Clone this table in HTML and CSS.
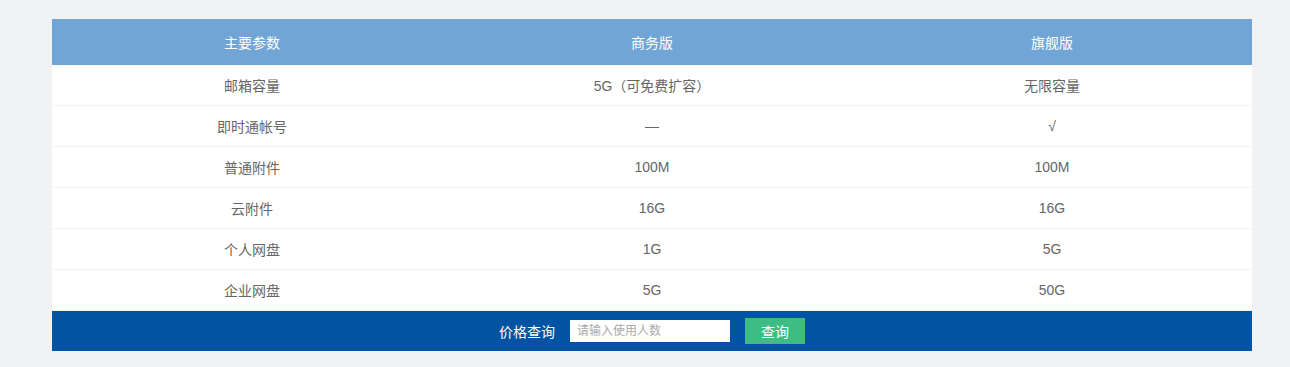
FILE: index.html
```html
<!DOCTYPE html>
<html lang="zh">
<head>
<meta charset="utf-8">
<link rel="stylesheet" href="styles.css">
</head>
<body>
<div class="page">
  <div class="price-table">
    <div class="row head">
      <div class="cell">主要参数</div>
      <div class="cell">商务版</div>
      <div class="cell">旗舰版</div>
    </div>
    <div class="row">
      <div class="cell">邮箱容量</div>
      <div class="cell">5G（可免费扩容）</div>
      <div class="cell">无限容量</div>
    </div>
    <div class="row">
      <div class="cell">即时通帐号</div>
      <div class="cell">—</div>
      <div class="cell">√</div>
    </div>
    <div class="row">
      <div class="cell">普通附件</div>
      <div class="cell">100M</div>
      <div class="cell">100M</div>
    </div>
    <div class="row">
      <div class="cell">云附件</div>
      <div class="cell">16G</div>
      <div class="cell">16G</div>
    </div>
    <div class="row">
      <div class="cell">个人网盘</div>
      <div class="cell">1G</div>
      <div class="cell">5G</div>
    </div>
    <div class="row">
      <div class="cell">企业网盘</div>
      <div class="cell">5G</div>
      <div class="cell">50G</div>
    </div>
    <div class="query">
      <span class="query-label">价格查询</span>
      <input class="query-input" type="text" placeholder="请输入使用人数">
      <button class="query-btn" type="button">查询</button>
    </div>
  </div>
</div>
</body>
</html>
```
FILE: styles.css
```css
html, body {
  margin: 0;
  padding: 0;
  background: #f1f2f4;
}
body {
  font-family: "Liberation Sans", Arial, "Noto Sans CJK SC", sans-serif;
  font-size: 14px;
  color: #666;
}
.page {
  padding: 19px 0 0 52px;
}
.price-table {
  width: 1200px;
  background: #fff;
}
.row {
  display: grid;
  grid-template-columns: repeat(3, 1fr);
  height: 40px;
  border-bottom: 1px solid #f1f1f1;
}
.row.head {
  height: 46px;
  background: #70a5d5;
  color: #fff;
  border-bottom: none;
}
.cell {
  display: flex;
  align-items: center;
  justify-content: center;
}
.query {
  height: 40px;
  background: #0054a2;
  display: flex;
  align-items: center;
  justify-content: center;
  color: #fff;
}
.query-label {
  margin-right: 15px;
  font-size: 14px;
}
.query-input {
  width: 160px;
  height: 22px;
  box-sizing: border-box;
  border: none;
  outline: none;
  padding: 0 7px;
  font-family: inherit;
  font-size: 12px;
  color: #666;
  margin: 0 15px 0 0;
}
.query-input::placeholder {
  color: #aaa;
}
.query-btn {
  width: 60px;
  height: 26px;
  border: none;
  background: #3dbd83;
  color: #fff;
  font-family: inherit;
  font-size: 14px;
  padding: 0;
}
```
